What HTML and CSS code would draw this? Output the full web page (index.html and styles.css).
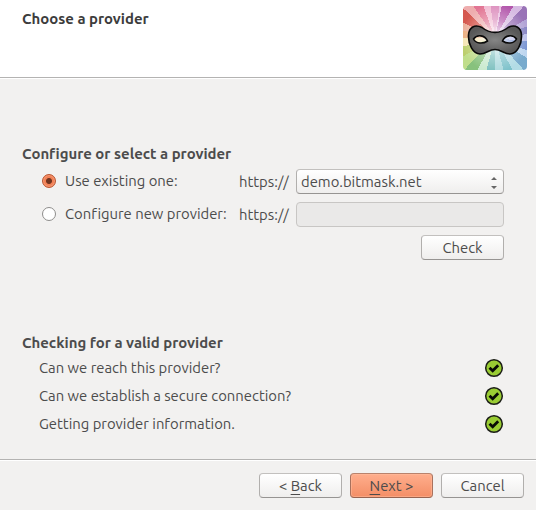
FILE: index.html
```html
<!DOCTYPE html>
<html lang="en">
<head>
<meta charset="utf-8">
<title>Choose a provider</title>
<link rel="stylesheet" href="styles.css">
</head>
<body>
<svg class="defs" width="0" height="0">
  <symbol id="ok" viewBox="0 0 20 20">
    <circle cx="10" cy="10" r="8.3" fill="#99cc33" stroke="#1c1f17" stroke-width="1.5"/>
    <path d="M5.500 9.700 8.700 12.700 14.200 7.200" fill="none" stroke="#080a05" stroke-width="2.8"/>
  </symbol>
</svg>
<div class="wizard">
  <header class="head">
    <h1 class="title">Choose a provider</h1>
    <div class="logo">
      <svg width="64" height="64" viewBox="0 0 64 64">
        <defs>
          <radialGradient id="mask"><stop offset="0" stop-color="#858585"/><stop offset="1" stop-color="#585858"/></radialGradient>
        </defs>
        <path d="M5.500 29C6 21 12 18 19 21.500C27 28 37 28 45 21.500C52 18 58 21 58.500 29C59 38 54 48 47 48C41 48 38 43.500 32 43.500C26 43.500 23 48 17 48C10 48 5 38 5.500 29ZM10.500 33C13 38 20 38 24.500 35C22 29 14 28 10.500 33ZM53.500 33C50 28 42 29 39.500 35C44 38 51 38 53.500 33Z" fill="url(#mask)" fill-rule="evenodd" stroke="#090909" stroke-width="1.600"/>
      </svg>
    </div>
  </header>
  <main class="content">
    <section class="configure">
      <h2 class="title">Configure or select a provider</h2>
      <div class="option">
        <span class="radio on"></span>
        <span class="name">Use existing one:</span>
        <span class="scheme">https://</span>
        <div class="control select"><span>demo.bitmask.net</span>
          <svg width="8" height="14" viewBox="0 0 8 14"><path d="M1 5 4 2 7 5ZM1 11 4 14 7 11Z" fill="#666"/></svg>
        </div>
      </div>
      <div class="option">
        <span class="radio"></span>
        <span class="name">Configure new provider:</span>
        <span class="scheme">https://</span>
        <div class="control field"></div>
      </div>
      <div class="check-row"><button class="button">Check</button></div>
    </section>
    <section class="checks">
      <h2 class="title">Checking for a valid provider</h2>
      <div class="status"><span>Can we reach this provider?</span><svg width="20" height="20"><use href="#ok"/></svg></div>
      <div class="status"><span>Can we establish a secure connection?</span><svg width="20" height="20"><use href="#ok"/></svg></div>
      <div class="status"><span>Getting provider information.</span><svg width="20" height="20"><use href="#ok"/></svg></div>
    </section>
  </main>
  <footer class="foot">
    <button class="button">&lt; <u>B</u>ack</button>
    <button class="button primary"><u>N</u>ext &gt;</button>
    <button class="button">Cancel</button>
  </footer>
</div>
</body>
</html>
```
FILE: styles.css
```css
* { box-sizing: border-box; }
body { margin: 0; background: #f2f1f0; color: #4c4c4c; font: 14.84px/20px Ubuntu, "Noto Sans", sans-serif; font-variant-ligatures: none; }
.defs { display: block; }
.wizard { width: 536px; height: 510px; display: flex; flex-direction: column; }
.head { height: 79px; background: #fff; border-bottom: 1px solid #fff; box-shadow: inset 0 -1px #b4b3b2; display: flex; justify-content: space-between; padding: 6px 9px 0 22px; }
.title { margin: 0; font-size: 14.93px; line-height: 20px; font-weight: 700; white-space: nowrap; }
.head .title { margin-top: 3px; color: #3c3c3c; }
.logo { width: 64px; height: 64px; border-radius: 4px; overflow: hidden; background:
  radial-gradient(circle at 50% 50%, rgba(255,255,255,.9) 5%, rgba(255,255,255,.42) 40%, rgba(255,255,255,.12) 75%),
  conic-gradient(from -8deg, #d880b5 0 16deg, #e6b5dc 16deg 20deg, #a840a0 20deg 38deg, #d0b0de 38deg 50deg, #8b60ad 50deg 67deg, #a898d0 67deg 78deg, #7774bc 78deg 91deg, #b0b6e8 91deg 104deg, #6685cb 104deg 119deg, #b4d0ed 119deg 130deg, #669fc6 130deg 146deg, #a8d7e2 146deg 159deg, #6ebac4 159deg 173deg, #a2d4d9 173deg 188deg, #69b6b5 188deg 203deg, #c2e7c8 203deg 217deg, #77b96b 217deg 232deg, #b7d97b 232deg 248deg, #b3c859 248deg 263deg, #f3e1a8 263deg 278deg, #e8a16b 278deg 291deg, #e8a48d 291deg 304deg, #cf4137 304deg 321deg, #eca2a3 321deg 334deg, #de6285 334deg 348deg, #f0b3cd 348deg); }
.logo svg { display: block; }
.content { height: 380px; padding: 65px 32px 0 22px; }
.configure { height: 189px; }
.option { display: flex; align-items: center; height: 25px; padding-left: 20px; white-space: nowrap; }
.configure .title + .option { margin-top: 5px; }
.option + .option { margin-top: 8px; }
.radio { width: 14px; height: 14px; margin-bottom: 2px; border: 1px solid #8e8d8b; border-radius: 50%; background: #fff; }
.radio.on { border-color: #b9532d; background: radial-gradient(circle, #70341f 0 2.500px, #f28055 3.500px); box-shadow: inset 0 0 0 1px #f69a76; }
.name { width: 174px; padding-left: 9px; margin-top: -1px; }
.scheme { width: 66px; padding-left: 9px; }
.control { width: 208px; height: 25px; border: 1px solid #c8c6c4; border-radius: 4px; }
.select { display: flex; align-items: center; justify-content: space-between; padding: 0 5px 0 4px; background: linear-gradient(#fff, #efeeed); border-color: #c2c0be #b1afad #969492; }
.field { background: #eae9e8; }
.check-row { display: flex; justify-content: flex-end; margin-top: 8px; }
.button { width: 83px; height: 25px; padding: 0; border: 1px solid; border-color: #c2c0be #b1afad #969492; border-radius: 4px; background: linear-gradient(#fff, #efeeed); color: #4c4c4c; font: inherit; line-height: 22px; white-space: nowrap; }
.primary { background: linear-gradient(#ffae8d, #f38e66); border-color: #b9836d #a8715d #976350; box-shadow: inset 0 0 0 1px rgba(255,190,160,.5); }
u { text-decoration-thickness: 1px; text-underline-offset: 3px; text-decoration-skip-ink: none; }
.status { height: 28px; padding-left: 17px; display: flex; align-items: center; justify-content: space-between; white-space: nowrap; }
.checks .title + .status { margin-top: 1px; }
.foot { height: 51px; border-top: 1px solid #b4b3b2; box-shadow: inset 0 1px #fff; padding: 13px 12px 0; display: flex; justify-content: flex-end; gap: 8px; }
```
